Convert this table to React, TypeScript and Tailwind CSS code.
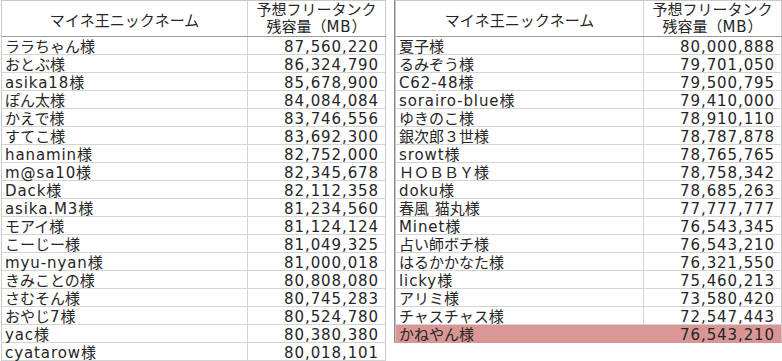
import React from "react";

type Row = [string, string];

const leftRows: Row[] = [
  ["ララちゃん様", "87,560,220"],
  ["おとぶ様", "86,324,790"],
  ["asika18様", "85,678,900"],
  ["ぽん太様", "84,084,084"],
  ["かえで様", "83,746,556"],
  ["すてこ様", "83,692,300"],
  ["hanamin様", "82,752,000"],
  ["m@sa10様", "82,345,678"],
  ["Dack様", "82,112,358"],
  ["asika.M3様", "81,234,560"],
  ["モアイ様", "81,124,124"],
  ["こーじー様", "81,049,325"],
  ["myu-nyan様", "81,000,018"],
  ["きみことの様", "80,808,080"],
  ["さむそん様", "80,745,283"],
  ["おやじ7様", "80,524,780"],
  ["yac様", "80,380,380"],
  ["cyatarow様", "80,018,101"],
];

const rightRows: Row[] = [
  ["夏子様", "80,000,888"],
  ["るみぞう様", "79,701,050"],
  ["C62-48様", "79,500,795"],
  ["sorairo-blue様", "79,410,000"],
  ["ゆきのこ様", "78,910,110"],
  ["銀次郎３世様", "78,787,878"],
  ["srowt様", "78,765,765"],
  ["ＨＯＢＢＹ様", "78,758,342"],
  ["doku様", "78,685,263"],
  ["春風 猫丸様", "77,777,777"],
  ["Minet様", "76,543,345"],
  ["占い師ボチ様", "76,543,210"],
  ["はるかかなた様", "76,321,550"],
  ["licky様", "75,460,213"],
  ["アリミ様", "73,580,420"],
  ["チャスチャス様", "72,547,443"],
  ["かねやん様", "76,543,210"],
];

// latin runs get a little extra spacing so they sit as wide as the sheet's font
function Txt({ s }: { s: string }) {
  const parts = s.split(/([\x20-\x7e]+)/).filter(Boolean);
  return (
    <>
      {parts.map((p, i) =>
        /^[\x20-\x7e]+$/.test(p) ? (
          <span key={i} className="tracking-[0.9px]">{p}</span>
        ) : (
          <span key={i}>{p}</span>
        )
      )}
    </>
  );
}

function Sheet({ rows, col1, highlightLast }: { rows: Row[]; col1: string; highlightLast?: boolean }) {
  return (
    <div className="flex flex-col border-l border-t border-[#c8c8c8]">
      <div className="flex h-[36px] border-b border-[#9c9c9c]">
        <div className={`${col1} flex items-center justify-center pt-[6px] border-r border-[#d4d4d4]`}>
          マイネ王ニックネーム
        </div>
        <div className="w-[138px] flex flex-col items-center leading-[17px] pt-[1px] border-r border-[#c8c8c8]">
          <span>予想フリータンク</span>
          <span>
            残容量（<Txt s="MB" />）
          </span>
        </div>
      </div>
      {rows.map(([name, mb], i) => {
        const hl = highlightLast && i === rows.length - 1;
        return (
          <div
            key={i}
            className={[
              "flex h-[18px] border-b leading-[18px]",
              hl ? "bg-[#d99694] border-[#d99694]" : "border-[#d4d4d4]",
            ].join(" ")}
          >
            <div className={`${col1} pl-[3px] pt-[1px] whitespace-nowrap border-r ${hl ? "border-[#d99694]" : "border-[#d4d4d4]"}`}>
              <Txt s={name} />
            </div>
            <div className="w-[138px] pr-[6px] pt-[1px] text-right whitespace-nowrap border-r border-[#c8c8c8]">
              <Txt s={mb} />
            </div>
          </div>
        );
      })}
    </div>
  );
}

export default function App() {
  return (
    <div className="w-[782px] h-[361px] overflow-hidden bg-white text-[#262626] text-[15px] font-['DejaVu_Sans','Noto_Sans_CJK_JP',sans-serif] flex items-start gap-[8px] pl-[1px]">
      <Sheet rows={leftRows} col1="w-[246px]" />
      <div className="shrink-0 border-l border-[#8a8a8a]">
        <Sheet rows={rightRows} col1="w-[248px]" highlightLast />
      </div>
    </div>
  );
}
